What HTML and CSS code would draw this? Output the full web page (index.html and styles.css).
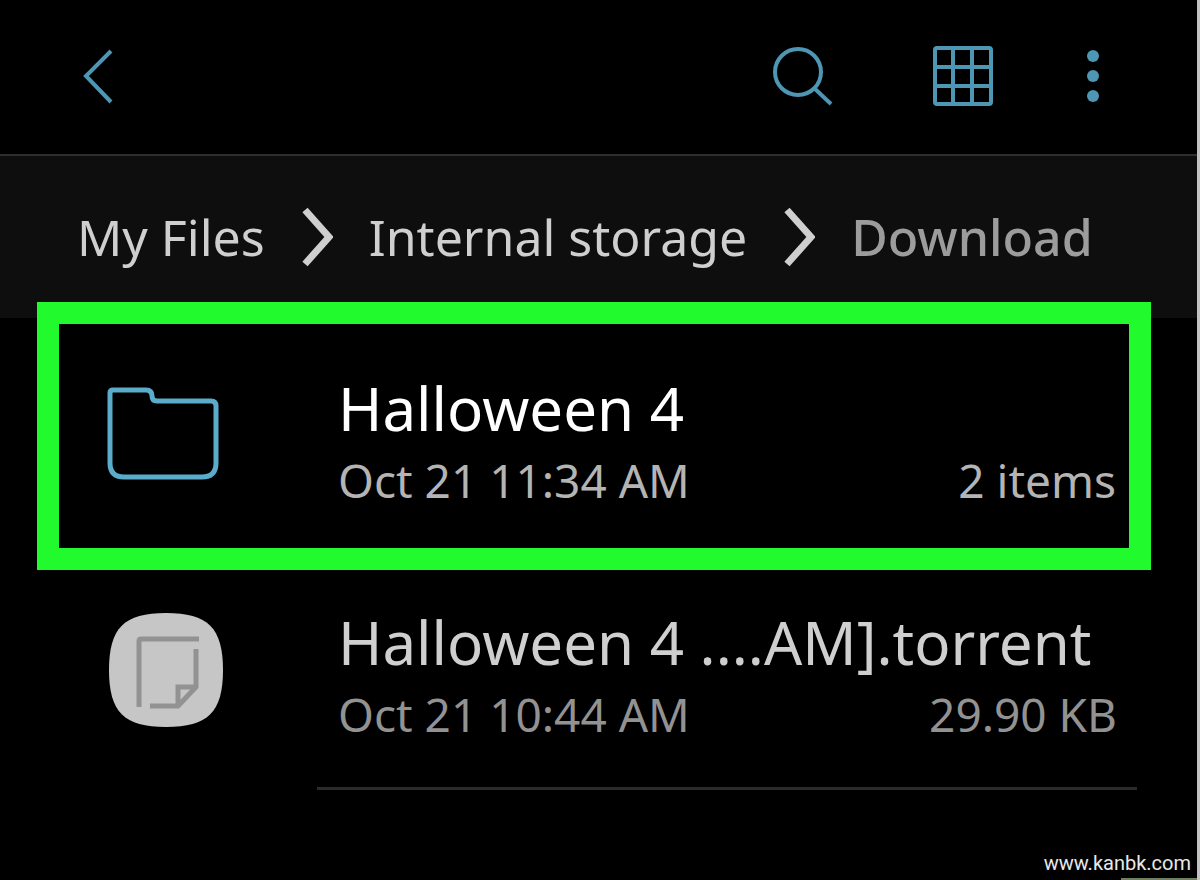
FILE: index.html
```html
<!DOCTYPE html>
<html lang="en">
  <head>
    <meta charset="UTF-8" />
    <meta name="viewport" content="width=device-width, initial-scale=1.0" />
    <title>My Files | Download</title>
    <link rel="stylesheet" href="styles.css">
  </head>
  <body>
    <!-- Toolbar starts -->
    <header class="toolbar">
      <button type="button" class="back" aria-label="Back">
        <svg width="40" height="60" viewBox="0 0 40 60">
          <path d="M33 5 L8 30 L33 56" />
        </svg>
      </button>
      <div class="actions">
        <button type="button" aria-label="Search">
          <svg width="72" height="64" viewBox="0 0 72 64">
            <circle cx="29" cy="28" r="23" />
            <path d="M45 44 L62 60" />
          </svg>
        </button>
        <button type="button" aria-label="Grid view">
          <svg width="64" height="64" viewBox="0 0 64 64">
            <rect x="4" y="4" width="56" height="56" rx="2" />
            <path d="M22 4 V60 M41 4 V60 M4 23 H60 M4 42 H60" />
          </svg>
        </button>
        <button type="button" aria-label="More options">
          <svg class="dots" width="16" height="64" viewBox="0 0 16 64">
            <circle cx="8" cy="12" r="6" />
            <circle cx="8" cy="32" r="6" />
            <circle cx="8" cy="52" r="6" />
          </svg>
        </button>
      </div>
    </header>
    <!-- Toolbar ends -->

    <nav class="path">
      <a href="#">My Files</a>
      <svg width="32" height="60" viewBox="0 0 32 60">
        <path d="M4 3 L28 30 L4 57" />
      </svg>
      <a href="#">Internal storage</a>
      <svg width="32" height="60" viewBox="0 0 32 60">
        <path d="M4 3 L28 30 L4 57" />
      </svg>
      <a href="#" class="current">Download</a>
    </nav>

    <!-- File list starts -->
    <main>
      <div class="row selected">
        <div class="icon">
          <svg class="folder" width="116" height="116" viewBox="0 0 116 116">
            <path d="M6 12 H39 Q45 12 45 18 Q45 23 50 23 H104 Q109 23 109 28 V85 Q109 99 95 99 H17 Q3 99 3 85 V15 Q3 12 6 12 Z" />
          </svg>
        </div>
        <div class="info">
          <h2>Halloween 4</h2>
          <p><span>Oct 21 11:34 AM</span><span>2 items</span></p>
        </div>
      </div>

      <div class="row">
        <div class="icon">
          <svg class="note" width="116" height="116" viewBox="0 0 116 116">
            <path class="tile" d="M59 1 C101 1 116 16 116 58 C116 100 101 115 59 115 C17 115 2 100 2 58 C2 16 17 1 59 1 Z" />
            <path d="M32 95 V29 Q32 27 34 27 H92 M89 37 V75 L71 94 H43 M71 94 V75 H89" />
          </svg>
        </div>
        <div class="info">
          <h2>Halloween 4 ....AM].torrent</h2>
          <p><span>Oct 21 10:44 AM</span><span>29.90 KB</span></p>
        </div>
      </div>
      <hr />
    </main>
    <!-- File list ends -->

    <footer>www.kanbk.com</footer>
  </body>
</html>
```
FILE: styles.css
```css
* {
  box-sizing: border-box;
}
body {
  margin: 0;
  min-height: 100vh;
  display: flex;
  flex-direction: column;
  background-color: #000;
  border-right: 3px solid #c4c2c2;
  color: #cfcfcf;
  font-family: "Noto Sans", sans-serif;
}
button {
  padding: 0;
  border: none;
  background: none;
  cursor: pointer;
}
svg {
  display: block;
  flex: none;
  fill: none;
}

/* toolbar */
.toolbar {
  height: 156px;
  display: flex;
  justify-content: space-between;
  align-items: center;
  padding: 0 96px 2px 78px;
  border-bottom: 2px solid #2e2e2e;
}
.toolbar svg {
  stroke: #4d97b5;
  stroke-width: 4;
}
.toolbar .dots {
  fill: #4d97b5;
  stroke: none;
}
.actions {
  display: flex;
  gap: 90px;
}

/* breadcrumb */
.path {
  height: 162px;
  display: flex;
  align-items: center;
  padding: 0 77px;
  background-color: #0e0e0e;
  font-size: 50px;
  white-space: nowrap;
}
.path a {
  color: #cfcfcf;
  text-decoration: none;
}
.path svg {
  margin: 0 36px;
  stroke: #cfcfcf;
  stroke-width: 7;
}
.path .current {
  color: #9c9c9c;
  font-weight: 500;
}

/* file rows */
.row {
  margin: 0 46px 0 37px;
  padding: 24px 34px 41px 70px;
  display: flex;
  align-items: center;
}
.selected {
  position: relative;
  margin-top: -16px;
  padding: 36px 13px 36px 48px;
  border: 22px solid #21fb2e;
  background-color: #000;
}
.icon {
  width: 231px;
  flex: none;
}
.info {
  flex: 1;
  padding-top: 8px;
  white-space: nowrap;
}
h2 {
  margin: 0;
  font-size: 60px;
  line-height: 80px;
  font-weight: 400;
}
.selected h2 {
  color: #fff;
}
p {
  margin: 0;
  display: flex;
  justify-content: space-between;
  color: #929292;
  font-size: 46px;
  line-height: 64px;
}
.selected p {
  color: #b4b4b4;
}
.folder {
  stroke: #5aacca;
  stroke-width: 5;
}
.note {
  stroke: #929292;
  stroke-width: 5;
}
.tile {
  fill: #c6c6c6;
  stroke: none;
}
hr {
  margin: 0 60px 0 317px;
  border: none;
  border-top: 3px solid #2b2b2b;
}

footer {
  position: relative;
  margin-top: auto;
  padding: 0 6px 4px;
  text-align: right;
  color: #e8e8e8;
  font-family: Roboto, sans-serif;
  font-size: 20px;
  line-height: 26px;
}
footer::after {
  content: "";
  position: absolute;
  right: 0;
  bottom: 0;
  width: 76px;
  height: 2px;
  background-color: #6f8060;
}
```
